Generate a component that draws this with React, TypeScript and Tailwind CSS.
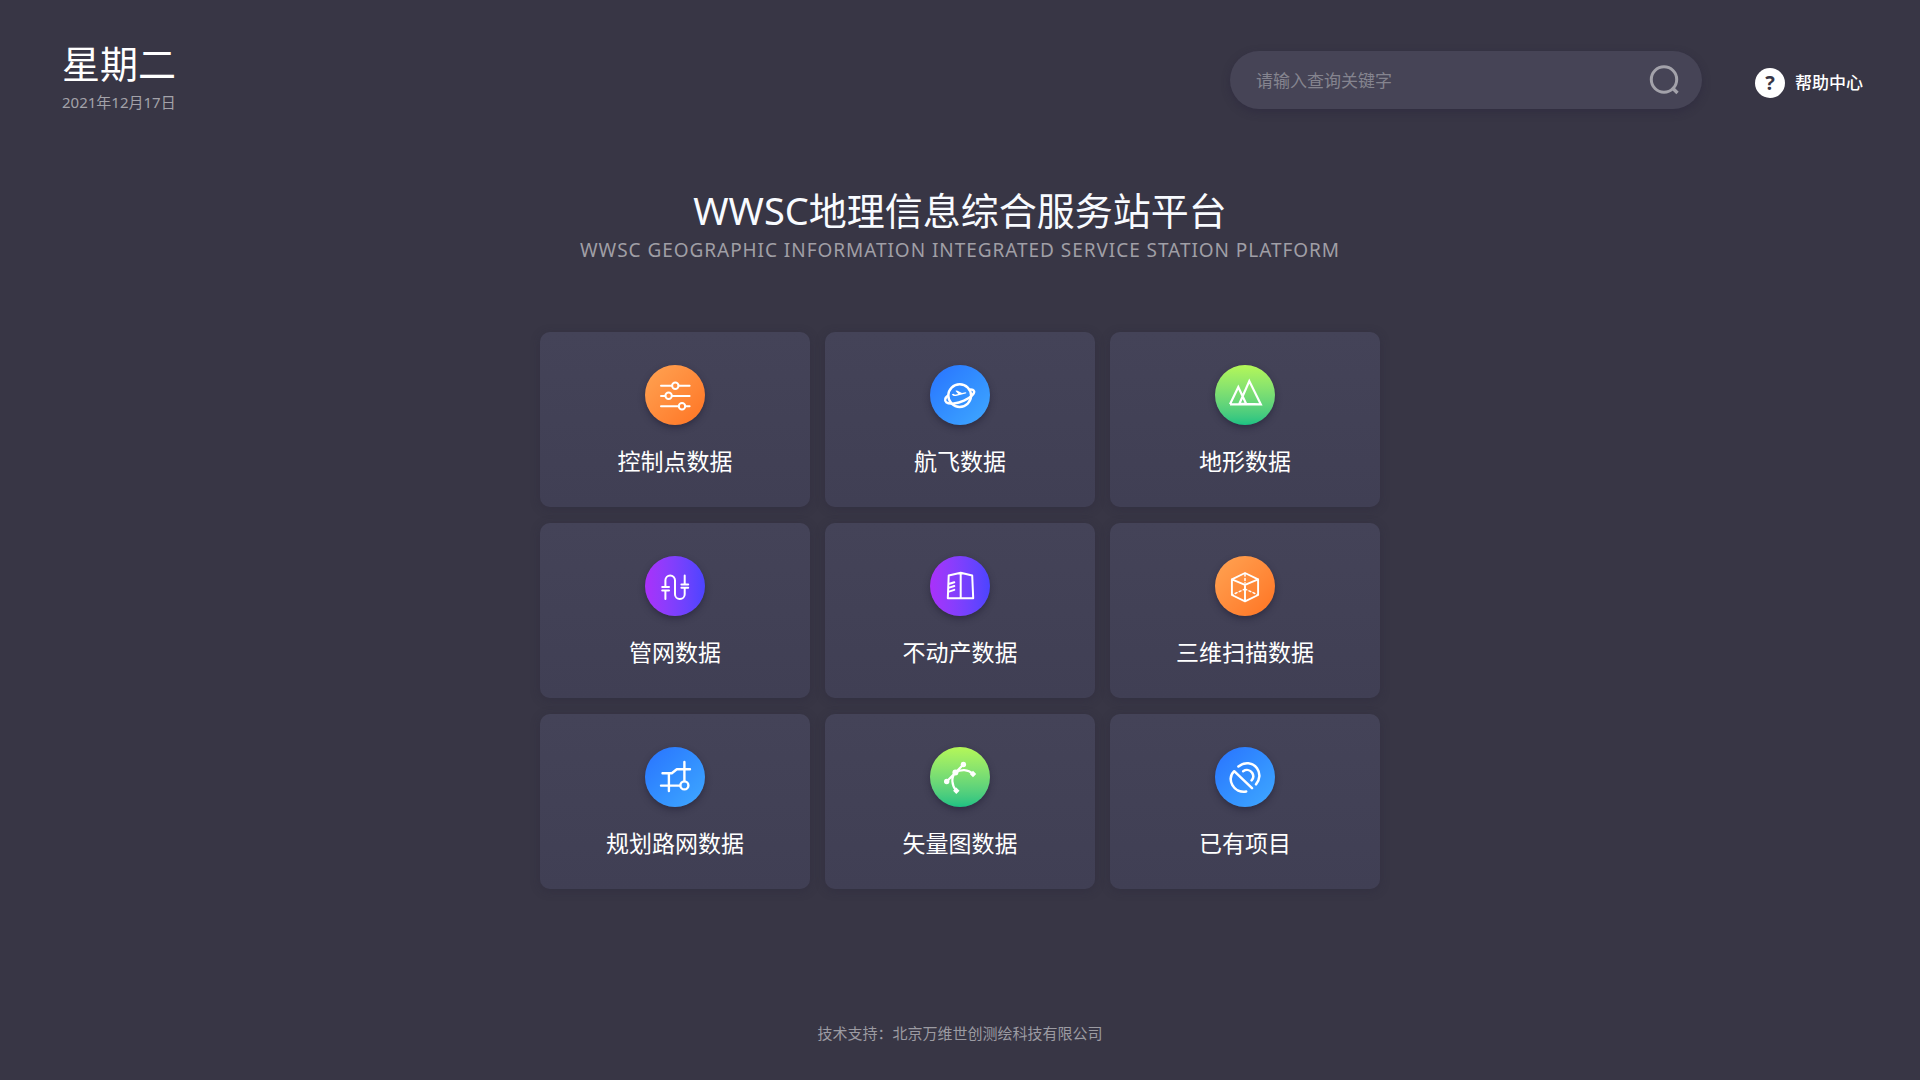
import type { ReactNode } from 'react';

interface Category {
  label: string;
  tone: keyof typeof TONE_CLASSES;
  icon: ReactNode;
}

const TONE_CLASSES = {
  orange: 'bg-linear-to-br from-[#ffa352] to-[#ff7320]',
  blue: 'bg-linear-to-br from-[#2a72ff] to-[#40a8ff]',
  green: 'bg-linear-to-b from-[#b4f757] to-[#19c283]',
  purple: 'bg-linear-to-r from-[#aa30fa] to-[#4b44ff]',
};

const CATEGORIES: Category[] = [
  {
    label: '控制点数据',
    tone: 'orange',
    icon: (
      <>
        <path d="M16 20.7H27M33.6 20.7H44.6M16 31H20.3M27 31H44.6M16 41.3H33.8M40.4 41.3H44.6" />
        <circle cx="30.3" cy="20.7" r="3.2" />
        <circle cx="23.6" cy="30.8" r="3.2" />
        <circle cx="37" cy="41.3" r="3.2" />
      </>
    ),
  },
  {
    label: '航飞数据',
    tone: 'blue',
    icon: (
      <>
        <circle cx="29.7" cy="30.6" r="11.4" strokeWidth="2.4" />
        <path
          d="M18 30.5C15 32.8 14.3 35.5 16.2 37.2C19.5 39.8 27.5 38.5 34 35.6C41 32.5 45.5 28 43.8 25.6C43.2 24.7 41.8 24.4 39.8 24.6"
          strokeWidth="2.4"
        />
        <path
          d="M21.8 29.2L23.4 28.8L25 29.8L28.2 29L25.4 25.8L27 25.4L32 28L35.4 27.2C36.6 27.2 36.6 28.2 35.6 28.6L26 31C24 31.3 22.6 30.6 21.8 29.2Z"
          fill="currentColor"
          stroke="none"
        />
      </>
    ),
  },
  {
    label: '地形数据',
    tone: 'green',
    icon: (
      <path
        d="M15 39.3L23.3 22L31 38.5M24.5 38.5L34.3 16L45.8 39.3Z M15 39.3H46"
        strokeLinecap="butt"
        strokeLinejoin="miter"
        strokeWidth="2.2"
      />
    ),
  },
  {
    label: '管网数据',
    tone: 'purple',
    icon: (
      <path d="M17.2 34.4H24M17.2 31H24M20.4 34.4V43M20.4 31V24.3A4.8 4.8 0 0 1 30 24.3V38.2A4.8 4.8 0 0 0 39.7 38.2V31.7M36.4 31.7H43.2M36.4 28.4H43.2M39.7 28.4V19.5" />
    ),
  },
  {
    label: '不动产数据',
    tone: 'purple',
    icon: (
      <path d="M18.7 19.5L30.7 16.8L42.2 19.5L43.2 42.3H17.8ZM30.7 16.8V42.3M19.5 27.8L24.3 26.2M19.3 31.6L24.3 30M19 35.6L24.3 33.9" />
    ),
  },
  {
    label: '三维扫描数据',
    tone: 'orange',
    icon: (
      <>
        <path d="M30 17L43.1 23.3V39L30 45.3L16.9 39V23.3ZM16.9 23.3L30 28.9L43.1 23.3M30 28.9V45.3" strokeWidth="1.9" />
        <path d="M30 18V27M30 33L17.5 38.7M30 33L42.5 38.7" strokeWidth="1.5" strokeDasharray="2 2.4" />
      </>
    ),
  },
  {
    label: '规划路网数据',
    tone: 'blue',
    icon: (
      <>
        <path d="M17.5 26.3H26.8L31.8 22.3H45M23.9 26.3V44M16 38.6H35M39.4 15V34" strokeWidth="2.4" />
        <circle cx="39.4" cy="38.4" r="4" strokeWidth="2.4" />
      </>
    ),
  },
  {
    label: '矢量图数据',
    tone: 'green',
    icon: (
      <>
        <path d="M16.7 34.5L33.4 17.5M25.3 25.5C31 22 38 22 43 27M25.3 25.5C21 30.5 21.5 38 26.3 43.7" strokeWidth="2.2" />
        <g fill="currentColor" stroke="none">
          <circle cx="16.7" cy="34.5" r="2.7" />
          <circle cx="33.4" cy="17.5" r="2.7" />
          <circle cx="25.4" cy="25.6" r="3" />
          <path d="M43 23.8L46.2 27L43 30.2L39.8 27ZM26.3 40.5L29.5 43.7L26.3 46.9L23.1 43.7Z" />
        </g>
      </>
    ),
  },
  {
    label: '已有项目',
    tone: 'blue',
    icon: (
      <path
        d="M31.2 44.5C25.5 45.4 20 43 17.4 38.2C14.8 33.2 15.5 27.8 19.2 24.2L37 41.2M23.4 19.5C29.5 14.4 37.6 15.3 42 21.2C45.6 26.2 45 32.8 41 37.3M28.2 24.3C31.2 22.2 35 22.9 37.1 25.8C38.8 28.4 38.5 31.3 36.6 33.4"
        strokeWidth="2.5"
      />
    ),
  },
];

function CategoryCard({ label, tone, icon }: Category) {
  return (
    <a
      href="#"
      className="flex flex-col items-center rounded-[10px] bg-linear-to-b from-[#444358] to-[#403f54] pt-[33px] pb-[30px] shadow-[0_2px_10px_rgba(40,38,58,0.35)]"
    >
      <span className={`size-[60px] rounded-full shadow-[0_3px_6px_rgba(30,28,50,0.5)] ${TONE_CLASSES[tone]}`}>
        <svg
          viewBox="0 0 60 60"
          className="size-full"
          fill="none"
          stroke="currentColor"
          strokeWidth="2"
          strokeLinecap="round"
          strokeLinejoin="round"
          aria-hidden="true"
        >
          {icon}
        </svg>
      </span>
      <span className="mt-5 text-[23px] leading-8">{label}</span>
    </a>
  );
}

function Header() {
  return (
    <header className="flex items-start justify-between pt-[38px] pr-[57px] pl-[62px]">
      <div>
        <p className="text-[38px] leading-[50px]">星期二</p>
        <p className="mt-1 text-[15px] leading-5 text-[#a3a2a9]">2021年12月17日</p>
      </div>
      <div className="flex items-center gap-[53px] pt-[13px]">
        <form
          role="search"
          className="flex h-[58px] w-[472px] items-center rounded-full bg-[#464456] pr-[22px] pl-[26px] shadow-[0_3px_8px_rgba(40,36,60,0.45)]"
        >
          <input
            type="text"
            aria-label="请输入查询关键字"
            placeholder="请输入查询关键字"
            className="min-w-0 flex-1 bg-transparent pt-[2px] text-[17px] outline-none placeholder:text-[#85848f]"
          />
          <button type="submit" aria-label="搜索" className="text-[#a3a2aa]">
            <svg viewBox="0 0 32 32" className="size-8" fill="none" stroke="currentColor" strokeWidth="3">
              <circle cx="16" cy="15.5" r="12.7" />
              <path d="M24 23.5L29.5 29" strokeWidth="3.4" />
            </svg>
          </button>
        </form>
        <a href="#" className="flex items-center gap-[10px] pt-[6px] text-[17px] font-medium">
          <span className="flex size-[30px] items-center justify-center rounded-full bg-white text-[20px] font-bold text-[#383645]">
            ?
          </span>
          帮助中心
        </a>
      </div>
    </header>
  );
}

export default function App() {
  return (
    <div className="flex min-h-screen flex-col bg-[#383645] font-['Noto_Sans','Noto_Sans_CJK_SC',sans-serif] text-white">
      <Header />
      <main className="flex flex-col items-center pt-[72px]">
        <h1 className="text-[38px] leading-[52px] text-[#f8fbff]">WWSC地理信息综合服务站平台</h1>
        <p className="text-[19px] leading-7 tracking-wider text-[#a09fa6]">
          WWSC GEOGRAPHIC INFORMATION INTEGRATED SERVICE STATION PLATFORM
        </p>
        <nav className="mt-[68px] grid w-[840px] grid-cols-3 gap-x-[15px] gap-y-4">
          {CATEGORIES.map((category) => (
            <CategoryCard key={category.label} {...category} />
          ))}
        </nav>
      </main>
      <footer className="mt-auto pb-[37px] text-center text-[15px] leading-5 text-[#9c9ba2]">
        技术支持：北京万维世创测绘科技有限公司
      </footer>
    </div>
  );
}
